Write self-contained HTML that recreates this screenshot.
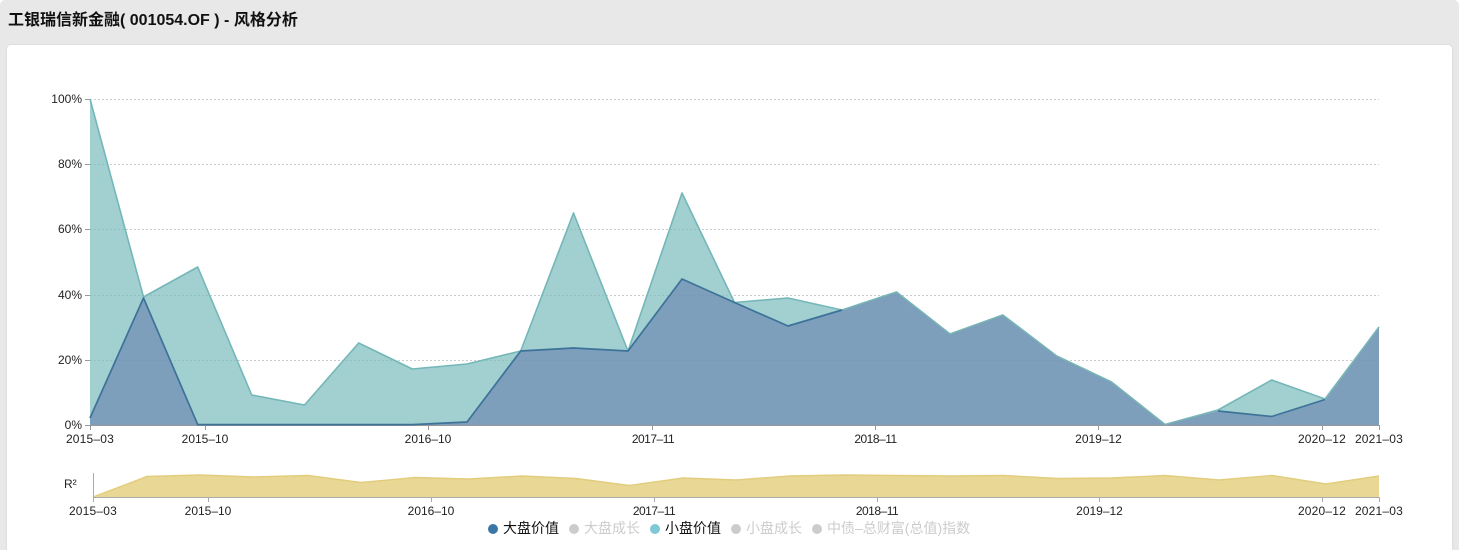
<!DOCTYPE html>
<html lang="zh">
<head>
<meta charset="utf-8">
<title>风格分析</title>
<style>
html,body{margin:0;padding:0;background:#fff;}
body{width:1459px;height:550px;overflow:hidden;position:relative;font-family:"Liberation Sans","Noto Sans CJK SC",sans-serif;}
.wrap{position:absolute;left:0;top:0;width:1459px;height:550px;background:#e8e8e8;border-radius:5px 5px 0 0;}
.title{position:absolute;left:8px;top:10px;font-size:16px;line-height:21px;font-weight:bold;color:#111;white-space:nowrap;}
.card{position:absolute;left:7px;top:45px;width:1445px;height:505px;background:#fff;border-radius:4px 4px 0 0;box-shadow:0 0 2px rgba(0,0,0,.12);}
svg{position:absolute;left:0;top:0;}
text{font-family:"Liberation Sans","Noto Sans CJK SC",sans-serif;font-size:12px;fill:#222;}
.lg{font-size:14px;fill:#111;}
.off{fill:#ccc;}
.n{letter-spacing:-.5px;}
.w{letter-spacing:.2px;}
</style>
</head>
<body>
<div class="wrap"></div>
<div class="title">工银瑞信新金融( 001054.OF ) - 风格分析</div>
<div class="card"></div>
<svg width="1459" height="550" viewBox="0 0 1459 550">
  <!-- grid -->
  <g stroke="#ccc" stroke-width="1" stroke-dasharray="2 2" fill="none">
    <path d="M90 99.5H1379M90 164.5H1379M90 229.5H1379M90 295.5H1379M90 360.5H1379"/>
  </g>
  <g stroke="#999" stroke-width="1" fill="none">
    <path d="M85 99.5H90M85 164.5H90M85 229.5H90M85 295.5H90M85 360.5H90M85 425.5H90"/>
    <path d="M90 425.5H1379"/>
    <path d="M90.5 425V430M205.5 425V430M428.5 425V430M652.5 425V430M875.5 425V430M1098.5 425V430M1322.5 425V430M1379.5 425V430"/>
  </g>
  <!-- teal area -->
  <path fill="rgb(122,186,188)" fill-opacity=".7" d="M90 425V99L143.5 297L197.7 267L251.7 395L304.5 405L358.7 343L412.3 369L467 364L520.7 351L573.5 213L628 351L682 193L734.5 302.5L788 298L842 310L896.5 292L950 334L1002.8 315L1056.7 356L1111.5 382L1165 424.5L1218 410L1271.7 380L1325 399L1379 327V425Z"/>
  <path fill="none" stroke="#74b7b8" stroke-width="1.6" stroke-linejoin="round" d="M90 99L143.5 297L197.7 267L251.7 395L304.5 405L358.7 343L412.3 369L467 364L520.7 351L573.5 213L628 351L682 193L734.5 302.5L788 298L842 310L896.5 292L950 334L1002.8 315L1056.7 356L1111.5 382L1165 424.5L1218 410L1271.7 380L1325 399L1379 327"/>
  <!-- blue area -->
  <path fill="rgb(110,138,178)" fill-opacity=".7" d="M90 425V418L143.5 298L197.7 424.5L251.7 425L304.5 425L358.7 425L412.3 425L467 422L520.7 351L573.5 348L628 351L682 279L734.5 302.5L788 326L842 310L896.5 292L950 334L1002.8 315L1056.7 356L1111.5 382L1165 424.5L1218 411L1271.7 416.5L1325 399.5L1379 327V425Z"/>
  <path fill="none" stroke="#3d7299" stroke-width="1.7" stroke-linejoin="round" d="M90 418L143.5 298L197.7 424.6L251.7 424.6L304.5 424.6L358.7 424.6L412.3 424.6L467 422L520.7 351L573.5 348L628 351L682 279L734.5 302.5L788 326L842 310"/>
  <path fill="none" stroke="#3d7299" stroke-width="1.7" stroke-linejoin="round" d="M1218 411L1271.7 416.5L1325 399.5"/>
  <path fill="none" stroke="#7ab6b8" stroke-width="1.4" stroke-linejoin="round" d="M842 310L896.5 292L950 334L1002.8 315L1056.7 356L1111.5 382L1165 424.5L1218 410M1325 399.5L1379 327"/>
  <!-- y labels -->
  <g text-anchor="end">
    <text x="82" y="103">100%</text>
    <text x="82" y="168">80%</text>
    <text x="82" y="233">60%</text>
    <text x="82" y="299">40%</text>
    <text x="82" y="364">20%</text>
    <text x="82" y="429">0%</text>
  </g>
  <!-- x labels -->
  <g text-anchor="middle">
    <text class="w" x="90" y="443">2015–03</text>
    <text x="205" y="443">2015–10</text>
    <text x="428" y="443">2016–10</text>
    <text class="n" x="653" y="443">2017–11</text>
    <text class="n" x="875.5" y="443">2018–11</text>
    <text x="1098.5" y="443">2019–12</text>
    <text class="w" x="1322" y="443">2020–12</text>
    <text class="w" x="1379" y="443">2021–03</text>
  </g>
  <!-- mini chart -->
  <text x="64" y="488">R²</text>
  <path fill="#e9d795" d="M93 497L147 476.5L200 475L254 477L308 475.5L361 482.5L415 477.5L468 479L522 476L576 478.5L629 485.5L683 478L736 480L790 476L844 475L897 475.5L951 476L1004 475.5L1058 478.5L1111 478L1165 475.5L1219 480L1272 475.5L1326 484L1379 476V497.5H93Z"/>
  <path fill="none" stroke="#e2cd7d" stroke-width="1.4" d="M93 497L147 476.5L200 475L254 477L308 475.5L361 482.5L415 477.5L468 479L522 476L576 478.5L629 485.5L683 478L736 480L790 476L844 475L897 475.5L951 476L1004 475.5L1058 478.5L1111 478L1165 475.5L1219 480L1272 475.5L1326 484L1379 476"/>
  <g stroke="#aaa" stroke-width="1" fill="none">
    <path d="M93.5 473V502M93 497.5H1379"/>
    <path d="M208.5 497V502M431.5 497V502M654.5 497V502M877.5 497V502M1099.5 497V502M1322.5 497V502M1379.5 497V502"/>
  </g>
  <g text-anchor="middle">
    <text class="w" x="93" y="515">2015–03</text>
    <text x="208" y="515">2015–10</text>
    <text x="431" y="515">2016–10</text>
    <text class="n" x="654" y="515">2017–11</text>
    <text class="n" x="877" y="515">2018–11</text>
    <text x="1099.5" y="515">2019–12</text>
    <text class="w" x="1322" y="515">2020–12</text>
    <text class="w" x="1379" y="515">2021–03</text>
  </g>
  <!-- legend -->
  <circle cx="493" cy="529" r="5" fill="#3b77a6"/>
  <text class="lg" x="503" y="533">大盘价值</text>
  <circle cx="574" cy="529" r="5" fill="#ccc"/>
  <text class="lg off" x="584" y="533">大盘成长</text>
  <circle cx="655" cy="529" r="5" fill="#7fc8d6"/>
  <text class="lg" x="665" y="533">小盘价值</text>
  <circle cx="736" cy="529" r="5" fill="#ccc"/>
  <text class="lg off" x="746" y="533">小盘成长</text>
  <circle cx="817" cy="529" r="5" fill="#ccc"/>
  <text class="lg off" x="827" y="533">中债–总财富(总值)指数</text>
</svg>
</body>
</html>
